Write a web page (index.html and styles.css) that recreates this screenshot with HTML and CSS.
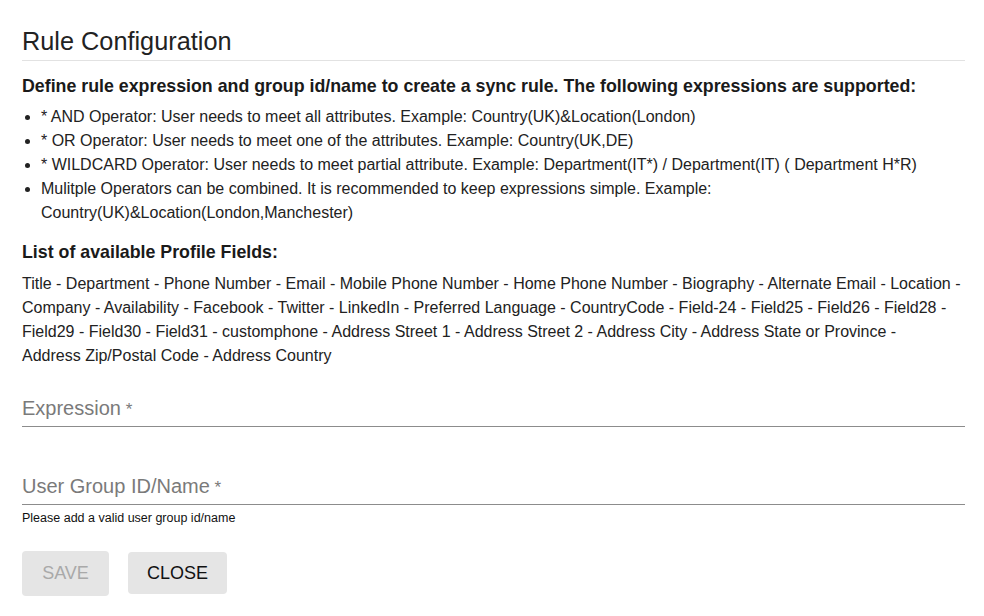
FILE: index.html
```html
<!DOCTYPE html>
<html>
<head>
<meta charset="utf-8">
<link rel="stylesheet" href="styles.css">
</head>
<body>
<div class="panel">
  <h1 class="title">Rule Configuration</h1>
  <h2 class="subhead">Define rule expression and group id/name to create a sync rule. The following expressions are supported:</h2>
  <ul class="rules">
    <li>* AND Operator: User needs to meet all attributes. Example: Country(UK)&amp;Location(London)</li>
    <li>* OR Operator: User needs to meet one of the attributes. Example: Country(UK,DE)</li>
    <li>* WILDCARD Operator: User needs to meet partial attribute. Example: Department(IT*) / Department(IT) ( Department H*R)</li>
    <li>Mulitple Operators can be combined. It is recommended to keep expressions simple. Example: Country(UK)&amp;Location(London,Manchester)</li>
  </ul>
  <h2 class="subhead fields-head">List of available Profile Fields:</h2>
  <p class="fields">Title - Department - Phone Number - Email - Mobile Phone Number - Home Phone Number - Biography - Alternate Email - Location - Company - Availability - Facebook - Twitter - LinkedIn - Preferred Language - CountryCode - Field-24 - Field25 - Field26 - Field28 - Field29 - Field30 - Field31 - customphone - Address Street 1 - Address Street 2 - Address City - Address State or Province - Address&nbsp;Zip/Postal&nbsp;Code - Address Country</p>
  <div class="field expr">
    <div class="input">Expression<span class="req"> *</span></div>
  </div>
  <div class="field group">
    <div class="input">User Group ID/Name<span class="req"> *</span></div>
  </div>
  <div class="helper">Please add a valid user group id/name</div>
  <div class="actions">
    <button class="btn save" disabled>SAVE</button>
    <button class="btn close">CLOSE</button>
  </div>
</div>
</body>
</html>
```

FILE: styles.css
```css
html, body {
  margin: 0;
  padding: 0;
  background: #fff;
}
body {
  font-family: "Liberation Sans", Arial, sans-serif;
  color: #222;
}
.panel {
  width: 943px;
  margin-left: 22px;
  padding-top: 26px;
}
.title {
  margin: 0;
  font-size: 25.3px;
  font-weight: normal;
  line-height: 30px;
  color: #222;
  padding-bottom: 4px;
  border-bottom: 1px solid #e2e2e2;
}
.subhead {
  margin: 14px 0 0;
  font-size: 17.8px;
  font-weight: bold;
  line-height: 22px;
  color: #1a1a1a;
}
.rules {
  margin: 8px 0 0;
  padding-left: 19px;
  font-size: 16px;
  line-height: 24px;
  color: #222;
}
.fields-head {
  margin-top: 16px;
}
.fields {
  margin: 9px 0 0;
  font-size: 16px;
  line-height: 24px;
  color: #222;
}
.field {
  border-bottom: 1px solid #8c8c8c;
}
.expr {
  margin-top: 28px;
}
.group {
  margin-top: 47px;
}
.input {
  font-size: 20px;
  line-height: 24px;
  height: 24px;
  padding-bottom: 6px;
  color: #7a7a7a;
}
.req {
  font-size: 17px;
  line-height: 1;
}
.helper {
  font-size: 12.5px;
  line-height: 16px;
  margin-top: 5px;
  color: #111;
}
.actions {
  display: flex;
  align-items: flex-start;
  gap: 19px;
  margin-top: 25px;
}
.btn {
  font-family: "Liberation Sans", Arial, sans-serif;
  font-size: 18px;
  border: none;
  border-radius: 4px;
  background: #e5e5e5;
  padding: 0;
}
.save {
  width: 87px;
  height: 45px;
  color: #a9a9a9;
}
.close {
  width: 99px;
  height: 42px;
  margin-top: 1px;
  color: #111;
}
```
